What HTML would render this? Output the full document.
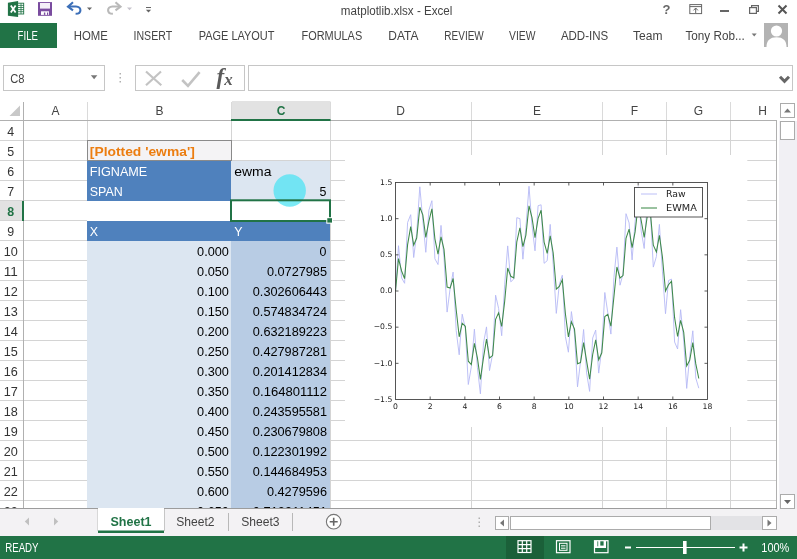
<!DOCTYPE html>
<html><head><meta charset="utf-8"><title>matplotlib.xlsx - Excel</title>
<style>html,body{margin:0;padding:0;background:#fff;overflow:hidden}svg{display:block;will-change:transform}text{white-space:pre}</style>
</head><body>
<svg width="797" height="559" viewBox="0 0 797 559" font-family="Liberation Sans, sans-serif" shape-rendering="auto">
<g id="titlebar">
<g id="xlicon">
<rect x="17.5" y="3.2" width="6.2" height="10.8" fill="#fff" stroke="#217346" stroke-width="0.9"/>
<path d="M18 5.4h6M18 7.5h6M18 9.6h6M18 11.7h6M21 3.2v10.8" stroke="#217346" stroke-width="0.8" fill="none"/>
<path d="M7.9 2.7 L18.1 0.9 V17.1 L7.9 15.7 Z" fill="#217346"/>
<path d="M10.8 5.6 L15.6 12.4 M15.6 5.6 L10.8 12.4" stroke="#fff" stroke-width="1.8" fill="none"/>
</g>
<g id="save">
<rect x="38" y="2.1" width="14" height="13.7" fill="#7a4c9f"/>
<rect x="40" y="3" width="10" height="5.6" fill="#f4f0f8"/>
<rect x="41" y="11.3" width="8" height="3.6" fill="#fff"/>
<rect x="43.9" y="12.5" width="1.4" height="2.4" fill="#7a4c9f"/>
<rect x="47" y="12.5" width="1.2" height="2.4" fill="#7a4c9f"/>
</g>
<g id="undo">
<path d="M69 6.5 H76 C79.2 6.5 80.4 8.6 80.4 10.2 C80.4 12.2 78.8 13.8 75.6 13.8" fill="none" stroke="#3c6fb8" stroke-width="2.1"/>
<path d="M73 2.3 L68 6.6 L73 10.4" fill="none" stroke="#3c6fb8" stroke-width="2.1"/>
<path d="M87 7.4 h5 l-2.5 2.8 z" fill="#666"/>
</g>
<g id="redo">
<path d="M119.5 6.5 H112.5 C109.3 6.5 108.1 8.6 108.1 10.2 C108.1 12.2 109.7 13.8 112.9 13.8" fill="none" stroke="#b9b9b9" stroke-width="2.1"/>
<path d="M115.5 2.3 L120.5 6.6 L115.5 10.4" fill="none" stroke="#b9b9b9" stroke-width="2.1"/>
<path d="M127 7.4 h5 l-2.5 2.8 z" fill="#c6c3cc"/>
</g>
<path d="M146 7.5 h5" stroke="#666" stroke-width="1" fill="none"/><path d="M145.9 9.8 h5.2 l-2.6 2.8 z" fill="#666"/>
<text x="396.6" y="14.6" font-size="12" fill="#444" text-anchor="middle" textLength="111.5" lengthAdjust="spacingAndGlyphs" >matplotlib.xlsx - Excel</text>
<text x="666.5" y="14" font-size="13" fill="#666" text-anchor="middle" font-weight="bold" >?</text>
<g stroke="#666" fill="none" stroke-width="1"><rect x="689.8" y="4.6" width="11.8" height="9"/><path d="M689.8 6.6h11.8M695.7 13v-4.8M693.5 10.4l2.2-2.4 2.2 2.4"/></g>
<rect x="720" y="10" width="9" height="2" fill="#666" />
<g stroke="#666" fill="none" stroke-width="1.2"><rect x="749.6" y="7.6" width="6.8" height="5.8"/><path d="M751.6 7.6V5.6h6.8v5.8h-2"/></g>
<path d="M778.5 5.5l8 8M786.5 5.5l-8 8" stroke="#555" stroke-width="2" fill="none"/>
</g>
<g id="tabs">
<rect x="0" y="23" width="57" height="25" fill="#217346" />
<text x="17.6" y="39.6" font-size="12" fill="#fff" text-anchor="start" textLength="20.3" lengthAdjust="spacingAndGlyphs" >FILE</text>
<text x="73.8" y="39.6" font-size="12" fill="#444" text-anchor="start" textLength="34.1" lengthAdjust="spacingAndGlyphs" >HOME</text>
<text x="133.5" y="39.6" font-size="12" fill="#444" text-anchor="start" textLength="38.6" lengthAdjust="spacingAndGlyphs" >INSERT</text>
<text x="198.7" y="39.6" font-size="12" fill="#444" text-anchor="start" textLength="75.8" lengthAdjust="spacingAndGlyphs" >PAGE LAYOUT</text>
<text x="301.5" y="39.6" font-size="12" fill="#444" text-anchor="start" textLength="60.7" lengthAdjust="spacingAndGlyphs" >FORMULAS</text>
<text x="388.3" y="39.6" font-size="12" fill="#444" text-anchor="start" textLength="30.1" lengthAdjust="spacingAndGlyphs" >DATA</text>
<text x="444.3" y="39.6" font-size="12" fill="#444" text-anchor="start" textLength="39.5" lengthAdjust="spacingAndGlyphs" >REVIEW</text>
<text x="509.1" y="39.6" font-size="12" fill="#444" text-anchor="start" textLength="26.4" lengthAdjust="spacingAndGlyphs" >VIEW</text>
<text x="560.9" y="39.6" font-size="12" fill="#444" text-anchor="start" textLength="47.3" lengthAdjust="spacingAndGlyphs" >ADD-INS</text>
<text x="633.1" y="39.6" font-size="12" fill="#444" text-anchor="start" textLength="29.4" lengthAdjust="spacingAndGlyphs" >Team</text>
<text x="685.4" y="39.6" font-size="12" fill="#444" text-anchor="start" textLength="59.3" lengthAdjust="spacingAndGlyphs" >Tony Rob...</text>
<path d="M751.7 33.5h5l-2.5 3z" fill="#777"/>
<g id="avatar"><rect x="764" y="23" width="24" height="24" fill="#b3b3b3"/>
<circle cx="776.5" cy="31" r="5.6" fill="#fff"/>
<path d="M766.5 47 C766.5 40.5 770 37.2 776.5 37.2 C783 37.2 786.5 40.5 786.5 47 Z" fill="#fff"/></g>
</g>
<g id="fbar">
<rect x="3.5" y="65.5" width="101" height="25" fill="#fff" stroke="#c6c6c6"/>
<text x="10.3" y="82.9" font-size="12" fill="#444" text-anchor="start" textLength="14.3" lengthAdjust="spacingAndGlyphs" >C8</text>
<path d="M90.8 75.3h6.6l-3.3 4z" fill="#777"/>
<rect x="119.5" y="73" width="1.5" height="1.5" fill="#b0b0b0" />
<rect x="119.5" y="77" width="1.5" height="1.5" fill="#b0b0b0" />
<rect x="119.5" y="81" width="1.5" height="1.5" fill="#b0b0b0" />
<rect x="135.5" y="65.5" width="109" height="25" fill="#fff" stroke="#c6c6c6"/>
<path d="M146 71.5 L161.3 85.2 M161 71.5 L146 85.2" stroke="#c3c3c3" stroke-width="2.2" fill="none"/>
<path d="M182.2 80 L188 85.8 L199.6 72.2" stroke="#c3c3c3" stroke-width="2.6" fill="none"/>
<text x="216.6" y="84" font-size="23" fill="#5a5a5a" text-anchor="start" font-family="Liberation Serif, serif" font-style="italic" font-weight="bold">f</text>
<text x="224.3" y="84.8" font-size="17" fill="#5a5a5a" text-anchor="start" font-family="Liberation Serif, serif" font-style="italic" font-weight="bold">x</text>
<rect x="248.5" y="65.5" width="544" height="25" fill="#fff" stroke="#c6c6c6"/>
<path d="M780 76.8 L784.5 81.3 L789 76.8" stroke="#666" stroke-width="3" fill="none"/>
</g>
<g id="grid">
<rect x="232" y="101" width="98.5" height="19" fill="#e2e2e2" />
<line x1="23.5" y1="102" x2="23.5" y2="120" stroke="#b0b0b0" stroke-width="1" />
<line x1="87.5" y1="102" x2="87.5" y2="120" stroke="#dadada" stroke-width="1" />
<line x1="231.5" y1="102" x2="231.5" y2="120" stroke="#dadada" stroke-width="1" />
<line x1="330.5" y1="102" x2="330.5" y2="120" stroke="#dadada" stroke-width="1" />
<line x1="471.5" y1="102" x2="471.5" y2="120" stroke="#dadada" stroke-width="1" />
<line x1="602.5" y1="102" x2="602.5" y2="120" stroke="#dadada" stroke-width="1" />
<line x1="666.5" y1="102" x2="666.5" y2="120" stroke="#dadada" stroke-width="1" />
<line x1="730.5" y1="102" x2="730.5" y2="120" stroke="#dadada" stroke-width="1" />
<path d="M20 105.5 V116 H9.5 Z" fill="#c8c8c8"/>
<rect x="0" y="201" width="23" height="20" fill="#e2e2e2" />
<line x1="0" y1="140.5" x2="777" y2="140.5" stroke="#d4d4d4" stroke-width="1" />
<line x1="0" y1="160.5" x2="777" y2="160.5" stroke="#d4d4d4" stroke-width="1" />
<line x1="0" y1="180.5" x2="777" y2="180.5" stroke="#d4d4d4" stroke-width="1" />
<line x1="0" y1="200.5" x2="777" y2="200.5" stroke="#d4d4d4" stroke-width="1" />
<line x1="0" y1="220.5" x2="777" y2="220.5" stroke="#d4d4d4" stroke-width="1" />
<line x1="0" y1="240.5" x2="777" y2="240.5" stroke="#d4d4d4" stroke-width="1" />
<line x1="0" y1="260.5" x2="777" y2="260.5" stroke="#d4d4d4" stroke-width="1" />
<line x1="0" y1="280.5" x2="777" y2="280.5" stroke="#d4d4d4" stroke-width="1" />
<line x1="0" y1="300.5" x2="777" y2="300.5" stroke="#d4d4d4" stroke-width="1" />
<line x1="0" y1="320.5" x2="777" y2="320.5" stroke="#d4d4d4" stroke-width="1" />
<line x1="0" y1="340.5" x2="777" y2="340.5" stroke="#d4d4d4" stroke-width="1" />
<line x1="0" y1="360.5" x2="777" y2="360.5" stroke="#d4d4d4" stroke-width="1" />
<line x1="0" y1="380.5" x2="777" y2="380.5" stroke="#d4d4d4" stroke-width="1" />
<line x1="0" y1="400.5" x2="777" y2="400.5" stroke="#d4d4d4" stroke-width="1" />
<line x1="0" y1="420.5" x2="777" y2="420.5" stroke="#d4d4d4" stroke-width="1" />
<line x1="0" y1="440.5" x2="777" y2="440.5" stroke="#d4d4d4" stroke-width="1" />
<line x1="0" y1="460.5" x2="777" y2="460.5" stroke="#d4d4d4" stroke-width="1" />
<line x1="0" y1="480.5" x2="777" y2="480.5" stroke="#d4d4d4" stroke-width="1" />
<line x1="0" y1="500.5" x2="777" y2="500.5" stroke="#d4d4d4" stroke-width="1" />
<line x1="87.5" y1="121" x2="87.5" y2="508" stroke="#d4d4d4" stroke-width="1" />
<line x1="231.5" y1="121" x2="231.5" y2="508" stroke="#d4d4d4" stroke-width="1" />
<line x1="330.5" y1="121" x2="330.5" y2="508" stroke="#d4d4d4" stroke-width="1" />
<line x1="471.5" y1="121" x2="471.5" y2="508" stroke="#d4d4d4" stroke-width="1" />
<line x1="602.5" y1="121" x2="602.5" y2="508" stroke="#d4d4d4" stroke-width="1" />
<line x1="666.5" y1="121" x2="666.5" y2="508" stroke="#d4d4d4" stroke-width="1" />
<line x1="730.5" y1="121" x2="730.5" y2="508" stroke="#d4d4d4" stroke-width="1" />
<line x1="0" y1="120.5" x2="777" y2="120.5" stroke="#b0b0b0" stroke-width="1" />
<line x1="23.5" y1="102" x2="23.5" y2="508" stroke="#b0b0b0" stroke-width="1" />
<rect x="231" y="119" width="99.5" height="2" fill="#217346" />
<rect x="22" y="201" width="2" height="20" fill="#217346" />
<text x="55.5" y="114.8" font-size="12" fill="#444" text-anchor="middle" >A</text>
<text x="159.5" y="114.8" font-size="12" fill="#444" text-anchor="middle" >B</text>
<text x="281" y="114.8" font-size="12" fill="#217346" text-anchor="middle" font-weight="bold" >C</text>
<text x="400.5" y="114.8" font-size="12" fill="#444" text-anchor="middle" >D</text>
<text x="537" y="114.8" font-size="12" fill="#444" text-anchor="middle" >E</text>
<text x="634.5" y="114.8" font-size="12" fill="#444" text-anchor="middle" >F</text>
<text x="698.5" y="114.8" font-size="12" fill="#444" text-anchor="middle" >G</text>
<text x="762.5" y="114.8" font-size="12" fill="#444" text-anchor="middle" >H</text>
<text x="10.8" y="136.2" font-size="12.4" fill="#333" text-anchor="middle" >4</text>
<text x="10.8" y="156.2" font-size="12.4" fill="#333" text-anchor="middle" >5</text>
<text x="10.8" y="176.2" font-size="12.4" fill="#333" text-anchor="middle" >6</text>
<text x="10.8" y="196.2" font-size="12.4" fill="#333" text-anchor="middle" >7</text>
<text x="10.8" y="216.2" font-size="12.4" fill="#217346" text-anchor="middle" font-weight="bold" >8</text>
<text x="10.8" y="236.2" font-size="12.4" fill="#333" text-anchor="middle" >9</text>
<text x="10.8" y="256.2" font-size="12.4" fill="#333" text-anchor="middle" textLength="14.1" lengthAdjust="spacingAndGlyphs" >10</text>
<text x="10.8" y="276.2" font-size="12.4" fill="#333" text-anchor="middle" textLength="14.1" lengthAdjust="spacingAndGlyphs" >11</text>
<text x="10.8" y="296.2" font-size="12.4" fill="#333" text-anchor="middle" textLength="14.1" lengthAdjust="spacingAndGlyphs" >12</text>
<text x="10.8" y="316.2" font-size="12.4" fill="#333" text-anchor="middle" textLength="14.1" lengthAdjust="spacingAndGlyphs" >13</text>
<text x="10.8" y="336.2" font-size="12.4" fill="#333" text-anchor="middle" textLength="14.1" lengthAdjust="spacingAndGlyphs" >14</text>
<text x="10.8" y="356.2" font-size="12.4" fill="#333" text-anchor="middle" textLength="14.1" lengthAdjust="spacingAndGlyphs" >15</text>
<text x="10.8" y="376.2" font-size="12.4" fill="#333" text-anchor="middle" textLength="14.1" lengthAdjust="spacingAndGlyphs" >16</text>
<text x="10.8" y="396.2" font-size="12.4" fill="#333" text-anchor="middle" textLength="14.1" lengthAdjust="spacingAndGlyphs" >17</text>
<text x="10.8" y="416.2" font-size="12.4" fill="#333" text-anchor="middle" textLength="14.1" lengthAdjust="spacingAndGlyphs" >18</text>
<text x="10.8" y="436.2" font-size="12.4" fill="#333" text-anchor="middle" textLength="14.1" lengthAdjust="spacingAndGlyphs" >19</text>
<text x="10.8" y="456.2" font-size="12.4" fill="#333" text-anchor="middle" textLength="14.1" lengthAdjust="spacingAndGlyphs" >20</text>
<text x="10.8" y="476.2" font-size="12.4" fill="#333" text-anchor="middle" textLength="14.1" lengthAdjust="spacingAndGlyphs" >21</text>
<text x="10.8" y="496.2" font-size="12.4" fill="#333" text-anchor="middle" textLength="14.1" lengthAdjust="spacingAndGlyphs" >22</text>
<text x="10.8" y="516.2" font-size="12.4" fill="#333" text-anchor="middle" textLength="14.1" lengthAdjust="spacingAndGlyphs" >23</text>
<rect x="88" y="141" width="144" height="20" fill="#f4f3f5" stroke="#8a8a8a" transform="translate(-.5,-.5)"/>
<rect x="87" y="161" width="144" height="40" fill="#4f81bd" />
<rect x="231" y="161" width="99" height="40" fill="#dce6f1" />
<rect x="87" y="201" width="144" height="20" fill="#fff" />
<rect x="87" y="221" width="243" height="20" fill="#4f81bd" />
<rect x="87" y="241" width="144" height="267" fill="#dce6f1" />
<rect x="231" y="241" width="99" height="267" fill="#b8cce4" />
<text x="89.8" y="156.1" font-size="12.2" fill="#ec7d10" text-anchor="start" font-weight="bold" textLength="105" lengthAdjust="spacingAndGlyphs" >[Plotted 'ewma']</text>
<text x="89.8" y="176.2" font-size="12.4" fill="#fff" text-anchor="start" textLength="57.5" lengthAdjust="spacingAndGlyphs" >FIGNAME</text>
<text x="89.8" y="196.2" font-size="12.4" fill="#fff" text-anchor="start" textLength="33" lengthAdjust="spacingAndGlyphs" >SPAN</text>
<text x="234.3" y="176.2" font-size="12.4" fill="#000" text-anchor="start" textLength="37.2" lengthAdjust="spacingAndGlyphs" >ewma</text>
<text x="326.5" y="196.2" font-size="12.4" fill="#000" text-anchor="end" >5</text>
<text x="89.8" y="236.2" font-size="12.4" fill="#fff" text-anchor="start" >X</text>
<text x="234.3" y="236.2" font-size="12.4" fill="#fff" text-anchor="start" >Y</text>
<text x="197.1" y="256.2" font-size="12.4" fill="#000" text-anchor="start" textLength="31.8" lengthAdjust="spacingAndGlyphs" >0.000</text>
<text x="326.5" y="256.2" font-size="12.4" fill="#000" text-anchor="end" >0</text>
<text x="197.1" y="276.2" font-size="12.4" fill="#000" text-anchor="start" textLength="31.8" lengthAdjust="spacingAndGlyphs" >0.050</text>
<text x="266.9" y="276.2" font-size="12.4" fill="#000" text-anchor="start" textLength="60.1" lengthAdjust="spacingAndGlyphs" >0.0727985</text>
<text x="197.1" y="296.2" font-size="12.4" fill="#000" text-anchor="start" textLength="31.8" lengthAdjust="spacingAndGlyphs" >0.100</text>
<text x="252.8" y="296.2" font-size="12.4" fill="#000" text-anchor="start" textLength="74.2" lengthAdjust="spacingAndGlyphs" >0.302606443</text>
<text x="197.1" y="316.2" font-size="12.4" fill="#000" text-anchor="start" textLength="31.8" lengthAdjust="spacingAndGlyphs" >0.150</text>
<text x="252.8" y="316.2" font-size="12.4" fill="#000" text-anchor="start" textLength="74.2" lengthAdjust="spacingAndGlyphs" >0.574834724</text>
<text x="197.1" y="336.2" font-size="12.4" fill="#000" text-anchor="start" textLength="31.8" lengthAdjust="spacingAndGlyphs" >0.200</text>
<text x="252.8" y="336.2" font-size="12.4" fill="#000" text-anchor="start" textLength="74.2" lengthAdjust="spacingAndGlyphs" >0.632189223</text>
<text x="197.1" y="356.2" font-size="12.4" fill="#000" text-anchor="start" textLength="31.8" lengthAdjust="spacingAndGlyphs" >0.250</text>
<text x="252.8" y="356.2" font-size="12.4" fill="#000" text-anchor="start" textLength="74.2" lengthAdjust="spacingAndGlyphs" >0.427987281</text>
<text x="197.1" y="376.2" font-size="12.4" fill="#000" text-anchor="start" textLength="31.8" lengthAdjust="spacingAndGlyphs" >0.300</text>
<text x="252.8" y="376.2" font-size="12.4" fill="#000" text-anchor="start" textLength="74.2" lengthAdjust="spacingAndGlyphs" >0.201412834</text>
<text x="197.1" y="396.2" font-size="12.4" fill="#000" text-anchor="start" textLength="31.8" lengthAdjust="spacingAndGlyphs" >0.350</text>
<text x="252.8" y="396.2" font-size="12.4" fill="#000" text-anchor="start" textLength="74.2" lengthAdjust="spacingAndGlyphs" >0.164801112</text>
<text x="197.1" y="416.2" font-size="12.4" fill="#000" text-anchor="start" textLength="31.8" lengthAdjust="spacingAndGlyphs" >0.400</text>
<text x="252.8" y="416.2" font-size="12.4" fill="#000" text-anchor="start" textLength="74.2" lengthAdjust="spacingAndGlyphs" >0.243595581</text>
<text x="197.1" y="436.2" font-size="12.4" fill="#000" text-anchor="start" textLength="31.8" lengthAdjust="spacingAndGlyphs" >0.450</text>
<text x="252.8" y="436.2" font-size="12.4" fill="#000" text-anchor="start" textLength="74.2" lengthAdjust="spacingAndGlyphs" >0.230679808</text>
<text x="197.1" y="456.2" font-size="12.4" fill="#000" text-anchor="start" textLength="31.8" lengthAdjust="spacingAndGlyphs" >0.500</text>
<text x="252.8" y="456.2" font-size="12.4" fill="#000" text-anchor="start" textLength="74.2" lengthAdjust="spacingAndGlyphs" >0.122301992</text>
<text x="197.1" y="476.2" font-size="12.4" fill="#000" text-anchor="start" textLength="31.8" lengthAdjust="spacingAndGlyphs" >0.550</text>
<text x="252.8" y="476.2" font-size="12.4" fill="#000" text-anchor="start" textLength="74.2" lengthAdjust="spacingAndGlyphs" >0.144684953</text>
<text x="197.1" y="496.2" font-size="12.4" fill="#000" text-anchor="start" textLength="31.8" lengthAdjust="spacingAndGlyphs" >0.600</text>
<text x="266.9" y="496.2" font-size="12.4" fill="#000" text-anchor="start" textLength="60.1" lengthAdjust="spacingAndGlyphs" >0.4279596</text>
<text x="197.1" y="516.2" font-size="12.4" fill="#000" text-anchor="start" textLength="31.8" lengthAdjust="spacingAndGlyphs" >0.650</text>
<text x="252.8" y="516.2" font-size="12.4" fill="#000" text-anchor="start" textLength="74.2" lengthAdjust="spacingAndGlyphs" >0.713911451</text>
<circle cx="289.7" cy="190.5" r="16.2" fill="#4fe3f3" fill-opacity="0.75"/>
<rect x="231" y="200.3" width="99" height="20.7" fill="none" stroke="#217346" stroke-width="2"/>
<rect x="326.3" y="217.2" width="6.7" height="6.5" fill="#fff" />
<rect x="327.3" y="218.2" width="4.7" height="4.4" fill="#217346" />
</g>
<g id="chart">
<rect x="345" y="155" width="402.3" height="272" fill="#fff" />
<polyline points="395.5,291.0 398.5,245.7 401.6,277.9 404.6,283.3 407.6,222.5 410.7,214.7 413.7,257.5 416.7,233.3 419.8,186.8 422.8,220.1 425.8,252.3 428.9,210.2 431.9,200.7 434.9,258.8 438.0,264.5 441.0,225.4 444.0,257.8 447.1,312.1 450.1,288.8 453.1,272.1 456.2,330.6 459.2,354.8 462.2,314.2 465.3,328.4 468.3,384.5 471.3,366.9 474.4,329.2 477.4,367.5 480.4,393.8 483.5,343.1 486.5,326.9 489.5,370.6 492.6,354.0 495.6,295.2 498.6,308.4 501.7,335.7 504.7,284.2 507.7,245.9 510.8,281.8 513.8,279.0 516.8,217.7 519.9,218.6 522.9,259.2 525.9,227.5 529.0,186.3 532.0,225.6 535.0,250.8 538.1,205.7 541.1,204.8 544.1,263.3 547.2,260.7 550.2,224.4 553.2,264.4 556.3,313.4 559.3,284.5 562.3,275.2 565.4,336.6 568.4,352.2 571.4,311.6 574.5,334.0 577.5,386.9 580.5,361.8 583.6,329.5 586.6,373.0 589.6,391.4 592.7,338.0 595.7,330.1 598.7,373.1 601.8,348.1 604.8,292.5 607.8,312.8 610.9,334.1 613.9,277.6 616.9,247.1 620.0,285.2 623.0,274.0 626.0,213.7 629.1,222.9 632.1,259.9 635.1,221.5 638.2,186.7 641.2,231.0 644.2,248.5 647.3,201.7 650.3,209.6 653.3,267.1 656.4,256.5 659.4,224.4 662.4,271.1 665.5,313.7 668.5,280.5 671.5,279.1 674.6,342.0 677.6,349.0 680.6,309.7 683.7,340.0 686.7,388.4 689.7,356.6 692.8,330.8 695.8,378.1 698.8,388.2" fill="none" stroke="#b6b9f5" stroke-width="0.9"/>
<polyline points="395.5,291.0 398.5,258.6 401.6,271.0 404.6,278.6 407.6,244.6 410.7,226.6 413.7,245.2 416.7,238.0 419.8,207.3 422.8,214.9 425.8,237.4 428.9,221.1 431.9,208.9 434.9,238.8 438.0,254.2 441.0,236.9 444.0,249.4 447.1,287.0 450.1,288.1 453.1,278.5 456.2,309.8 459.2,336.8 462.2,323.2 465.3,326.3 468.3,361.2 471.3,364.6 474.4,343.4 477.4,357.8 480.4,379.4 483.5,357.6 486.5,339.2 489.5,358.0 492.6,355.6 495.6,319.3 498.6,312.8 501.7,326.5 504.7,301.1 507.7,268.0 510.8,276.3 513.8,277.9 516.8,241.8 519.9,227.9 522.9,246.6 525.9,235.1 529.0,205.8 532.0,217.7 535.0,237.6 538.1,218.4 541.1,210.2 544.1,242.1 547.2,253.3 550.2,235.9 553.2,253.0 556.3,289.2 559.3,286.4 562.3,279.7 565.4,313.8 568.4,336.9 571.4,321.7 574.5,329.1 577.5,363.8 580.5,362.6 583.6,342.7 586.6,360.9 589.6,379.2 592.7,354.5 595.7,339.8 598.7,359.8 601.8,352.8 604.8,316.6 607.8,314.3 610.9,326.2 613.9,297.0 616.9,267.0 620.0,278.0 623.0,275.6 626.0,238.4 629.1,229.1 632.1,247.6 635.1,231.9 638.2,204.8 641.2,220.5 644.2,237.3 647.3,215.9 650.3,212.1 653.3,245.1 656.4,251.9 659.4,235.4 662.4,256.8 665.5,291.0 668.5,284.7 671.5,281.3 674.6,317.7 677.6,336.5 680.6,320.4 683.7,332.2 686.7,365.9 689.7,360.3 692.8,342.6 695.8,363.9 698.8,378.5" fill="none" stroke="#3f8a49" stroke-width="1.05"/>
<rect x="395.5" y="182.5" width="312.0" height="217.0" fill="none" stroke="#444" stroke-width="0.9"/>
<text x="395.5" y="408.6" font-size="7.7" fill="#222" text-anchor="middle" font-family="DejaVu Sans, sans-serif" >0</text>
<line x1="430.1666666666667" y1="399.5" x2="430.1666666666667" y2="396.5" stroke="#333" stroke-width="0.8" />
<line x1="430.1666666666667" y1="182.5" x2="430.1666666666667" y2="185.5" stroke="#333" stroke-width="0.8" />
<text x="430.1666666666667" y="408.6" font-size="7.7" fill="#222" text-anchor="middle" font-family="DejaVu Sans, sans-serif" >2</text>
<line x1="464.8333333333333" y1="399.5" x2="464.8333333333333" y2="396.5" stroke="#333" stroke-width="0.8" />
<line x1="464.8333333333333" y1="182.5" x2="464.8333333333333" y2="185.5" stroke="#333" stroke-width="0.8" />
<text x="464.8333333333333" y="408.6" font-size="7.7" fill="#222" text-anchor="middle" font-family="DejaVu Sans, sans-serif" >4</text>
<line x1="499.5" y1="399.5" x2="499.5" y2="396.5" stroke="#333" stroke-width="0.8" />
<line x1="499.5" y1="182.5" x2="499.5" y2="185.5" stroke="#333" stroke-width="0.8" />
<text x="499.5" y="408.6" font-size="7.7" fill="#222" text-anchor="middle" font-family="DejaVu Sans, sans-serif" >6</text>
<line x1="534.1666666666666" y1="399.5" x2="534.1666666666666" y2="396.5" stroke="#333" stroke-width="0.8" />
<line x1="534.1666666666666" y1="182.5" x2="534.1666666666666" y2="185.5" stroke="#333" stroke-width="0.8" />
<text x="534.1666666666666" y="408.6" font-size="7.7" fill="#222" text-anchor="middle" font-family="DejaVu Sans, sans-serif" >8</text>
<line x1="568.8333333333334" y1="399.5" x2="568.8333333333334" y2="396.5" stroke="#333" stroke-width="0.8" />
<line x1="568.8333333333334" y1="182.5" x2="568.8333333333334" y2="185.5" stroke="#333" stroke-width="0.8" />
<text x="568.8333333333334" y="408.6" font-size="7.7" fill="#222" text-anchor="middle" font-family="DejaVu Sans, sans-serif" >10</text>
<line x1="603.5" y1="399.5" x2="603.5" y2="396.5" stroke="#333" stroke-width="0.8" />
<line x1="603.5" y1="182.5" x2="603.5" y2="185.5" stroke="#333" stroke-width="0.8" />
<text x="603.5" y="408.6" font-size="7.7" fill="#222" text-anchor="middle" font-family="DejaVu Sans, sans-serif" >12</text>
<line x1="638.1666666666666" y1="399.5" x2="638.1666666666666" y2="396.5" stroke="#333" stroke-width="0.8" />
<line x1="638.1666666666666" y1="182.5" x2="638.1666666666666" y2="185.5" stroke="#333" stroke-width="0.8" />
<text x="638.1666666666666" y="408.6" font-size="7.7" fill="#222" text-anchor="middle" font-family="DejaVu Sans, sans-serif" >14</text>
<line x1="672.8333333333333" y1="399.5" x2="672.8333333333333" y2="396.5" stroke="#333" stroke-width="0.8" />
<line x1="672.8333333333333" y1="182.5" x2="672.8333333333333" y2="185.5" stroke="#333" stroke-width="0.8" />
<text x="672.8333333333333" y="408.6" font-size="7.7" fill="#222" text-anchor="middle" font-family="DejaVu Sans, sans-serif" >16</text>
<text x="707.5" y="408.6" font-size="7.7" fill="#222" text-anchor="middle" font-family="DejaVu Sans, sans-serif" >18</text>
<text x="392.3" y="184.7" font-size="7.7" fill="#222" text-anchor="end" font-family="DejaVu Sans, sans-serif" >1.5</text>
<line x1="395.5" y1="218.66666666666666" x2="398.5" y2="218.66666666666666" stroke="#333" stroke-width="0.8" />
<line x1="707.5" y1="218.66666666666666" x2="704.5" y2="218.66666666666666" stroke="#333" stroke-width="0.8" />
<text x="392.3" y="220.86666666666665" font-size="7.7" fill="#222" text-anchor="end" font-family="DejaVu Sans, sans-serif" >1.0</text>
<line x1="395.5" y1="254.83333333333331" x2="398.5" y2="254.83333333333331" stroke="#333" stroke-width="0.8" />
<line x1="707.5" y1="254.83333333333331" x2="704.5" y2="254.83333333333331" stroke="#333" stroke-width="0.8" />
<text x="392.3" y="257.0333333333333" font-size="7.7" fill="#222" text-anchor="end" font-family="DejaVu Sans, sans-serif" >0.5</text>
<line x1="395.5" y1="291.0" x2="398.5" y2="291.0" stroke="#333" stroke-width="0.8" />
<line x1="707.5" y1="291.0" x2="704.5" y2="291.0" stroke="#333" stroke-width="0.8" />
<text x="392.3" y="293.2" font-size="7.7" fill="#222" text-anchor="end" font-family="DejaVu Sans, sans-serif" >0.0</text>
<line x1="395.5" y1="327.16666666666663" x2="398.5" y2="327.16666666666663" stroke="#333" stroke-width="0.8" />
<line x1="707.5" y1="327.16666666666663" x2="704.5" y2="327.16666666666663" stroke="#333" stroke-width="0.8" />
<text x="392.3" y="329.3666666666666" font-size="7.7" fill="#222" text-anchor="end" font-family="DejaVu Sans, sans-serif" >−0.5</text>
<line x1="395.5" y1="363.33333333333337" x2="398.5" y2="363.33333333333337" stroke="#333" stroke-width="0.8" />
<line x1="707.5" y1="363.33333333333337" x2="704.5" y2="363.33333333333337" stroke="#333" stroke-width="0.8" />
<text x="392.3" y="365.53333333333336" font-size="7.7" fill="#222" text-anchor="end" font-family="DejaVu Sans, sans-serif" >−1.0</text>
<text x="392.3" y="401.7" font-size="7.7" fill="#222" text-anchor="end" font-family="DejaVu Sans, sans-serif" >−1.5</text>
<rect x="634.5" y="187.5" width="68" height="29.5" fill="#fff" stroke="#444" stroke-width="0.9"/>
<line x1="641" y1="194" x2="657" y2="194" stroke="#b4b8f6" stroke-width="0.9" />
<line x1="641" y1="208" x2="657" y2="208" stroke="#3f8a49" stroke-width="1.05" />
<text x="666" y="197.2" font-size="9.3" fill="#222" text-anchor="start" textLength="19.6" lengthAdjust="spacingAndGlyphs" font-family="DejaVu Sans, sans-serif" >Raw</text>
<text x="666" y="211.3" font-size="9.3" fill="#222" text-anchor="start" textLength="30.8" lengthAdjust="spacingAndGlyphs" font-family="DejaVu Sans, sans-serif" >EWMA</text>
</g>
<g id="scroll">
<rect x="777" y="100" width="20" height="409" fill="#fff" />
<rect x="777.5" y="120.5" width="0.1" height="388" fill="none" />
<line x1="776.5" y1="120" x2="776.5" y2="508" stroke="#b0b0b0" stroke-width="1" />
<rect x="779" y="121" width="18" height="388" fill="#f1f0f4" />
<rect x="780.5" y="103.5" width="14" height="14" fill="#fff" stroke="#ababab"/>
<path d="M784 112.5h7l-3.5-4z" fill="#777"/>
<rect x="780.5" y="121.5" width="14" height="18" fill="#fff" stroke="#ababab"/>
<rect x="780.5" y="494.5" width="14" height="14" fill="#fff" stroke="#ababab"/>
<path d="M784 500h7l-3.5 4z" fill="#666"/>
</g>
<g id="sheettabs">
<rect x="0" y="509" width="797" height="27" fill="#f3f2f4" />
<line x1="0" y1="508.5" x2="777" y2="508.5" stroke="#9c9c9c" stroke-width="1" />
<path d="M29 517.5v8l-4.2-4z" fill="#c0c0c0"/><path d="M54 517.5v8l4.2-4z" fill="#c0c0c0"/>
<rect x="98" y="508" width="66" height="23" fill="#fff" />
<line x1="97.5" y1="509" x2="97.5" y2="531" stroke="#d8d8d8" stroke-width="1" />
<line x1="164.5" y1="509" x2="164.5" y2="531" stroke="#c6c6c6" stroke-width="1" />
<rect x="98" y="530.5" width="66" height="2.5" fill="#217346" />
<text x="131" y="526" font-size="12.5" fill="#217346" text-anchor="middle" font-weight="bold" textLength="41" lengthAdjust="spacingAndGlyphs" >Sheet1</text>
<text x="176.3" y="526" font-size="12.5" fill="#444" text-anchor="start" textLength="38.3" lengthAdjust="spacingAndGlyphs" >Sheet2</text>
<line x1="228.5" y1="513" x2="228.5" y2="531" stroke="#b8b8b8" stroke-width="1" />
<text x="241.2" y="526" font-size="12.5" fill="#444" text-anchor="start" textLength="38.3" lengthAdjust="spacingAndGlyphs" >Sheet3</text>
<line x1="292.5" y1="513" x2="292.5" y2="531" stroke="#b8b8b8" stroke-width="1" />
<circle cx="333.7" cy="521.7" r="7.3" fill="#fff" stroke="#777" stroke-width="1.1"/><path d="M329.7 521.7h8M333.7 517.7v8" stroke="#666" stroke-width="1.6"/>
<rect x="478.5" y="517.5" width="1.5" height="1.5" fill="#b0b0b0" />
<rect x="478.5" y="521.5" width="1.5" height="1.5" fill="#b0b0b0" />
<rect x="478.5" y="525.5" width="1.5" height="1.5" fill="#b0b0b0" />
<rect x="495.5" y="516.5" width="13" height="13" fill="#fff" stroke="#ababab"/>
<path d="M504 519.5v7l-4-3.5z" fill="#777"/>
<rect x="510.5" y="516.5" width="200" height="13" fill="#fff" stroke="#ababab"/>
<rect x="711" y="516" width="51" height="14" fill="#e3e3e6" />
<rect x="762.5" y="516.5" width="14" height="13" fill="#fff" stroke="#ababab"/>
<path d="M767.5 519.5v7l4-3.5z" fill="#777"/>
</g>
<g id="status">
<rect x="0" y="536" width="797" height="23" fill="#217346" />
<text x="5.2" y="551.6" font-size="12" fill="#fff" text-anchor="start" textLength="33.4" lengthAdjust="spacingAndGlyphs" >READY</text>
<rect x="506" y="536" width="38" height="23" fill="#1b6039" />
<g stroke="#fff" fill="none" stroke-width="1.2"><rect x="518" y="540.7" width="13" height="11.8"/><path d="M518 544.6h13M518 548.6h13M522.3 540.7v11.8M526.7 540.7v11.8"/></g>
<g stroke="#fff" fill="none" stroke-width="1.2"><rect x="556.5" y="540.7" width="13.5" height="12"/><rect x="559.5" y="543.3" width="7.5" height="7" stroke-width="1"/><path d="M561 545.5h4.5M561 547h4.5M561 548.5h4.5" stroke-width="0.7"/></g>
<g stroke="#fff" fill="none" stroke-width="1.2"><rect x="594.5" y="540.7" width="13.5" height="12"/></g><rect x="595" y="541" width="11" height="7" fill="#fff"/><rect x="597.4" y="541.3" width="0.8" height="5" fill="#217346"/><rect x="600.3" y="541.3" width="3.3" height="4.3" fill="#217346"/>
<rect x="625" y="546.5" width="6" height="2" fill="#fff" />
<line x1="636" y1="547.5" x2="735" y2="547.5" stroke="#fff" stroke-width="1" />
<rect x="683" y="541" width="3.6" height="13" fill="#fff" />
<rect x="739.5" y="546.5" width="8" height="2" fill="#fff" />
<rect x="742.5" y="543.5" width="2" height="8" fill="#fff" />
<text x="761.3" y="552" font-size="12" fill="#fff" text-anchor="start" textLength="28" lengthAdjust="spacingAndGlyphs" >100%</text>
</g>
</svg>
</body></html>
